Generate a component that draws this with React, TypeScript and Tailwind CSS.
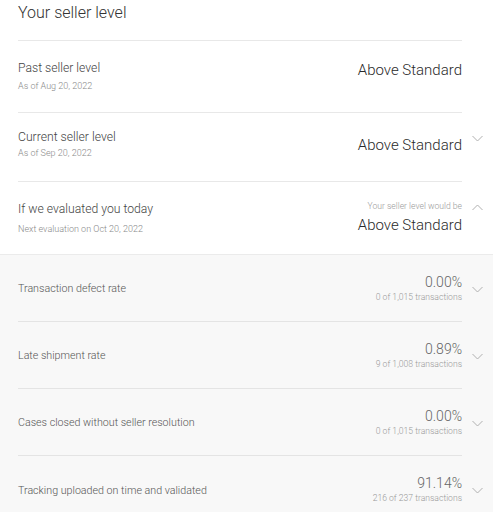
import React from "react";

const Chevron = ({ up = false }: { up?: boolean }) => (
  <svg width="11" height="7" viewBox="0 0 11 7" fill="none" className="text-[#b0b0b0]">
    <path d={up ? "M0.5 6 L5.5 1 L10.5 6" : "M0.5 1 L5.5 6 L10.5 1"} stroke="currentColor" strokeWidth="1" />
  </svg>
);

type LevelRowProps = {
  label: string;
  sub: string;
  value: string;
  note?: string;
  chevron?: "up" | "down";
  h: string;
  gap: string;
  leftClass: string;
  valueClass: string;
  border?: boolean;
};

const LevelRow = ({ label, sub, value, note, chevron, h, gap, leftClass, valueClass, border = true }: LevelRowProps) => (
  <div className={`flex ${h}`}>
    <div className={`ml-[18px] flex-1 flex items-center justify-between ${border ? "border-b border-[#e8e8e8]" : ""}`}>
      <div className={`flex flex-col ${leftClass}`}>
        <span className="text-[12.2px] leading-[16px] text-[#444]">{label}</span>
        <span className={`text-[9px] leading-[12px] text-[#8a8a8a] ${gap}`}>{sub}</span>
      </div>
      <div className={`flex flex-col items-end ${valueClass}`}>
        {note && <span className="text-[8.6px] leading-[10px] text-[#999] mb-[4px]">{note}</span>}
        <span className="text-[15px] leading-[20px] text-[#2a2a2a]">{value}</span>
      </div>
    </div>
    <div className="w-[31px] flex justify-center pt-[22px]">{chevron && <Chevron up={chevron === "up"} />}</div>
  </div>
);

type MetricProps = { label: string; pct: string; sub: string; border?: boolean };

const MetricRow = ({ label, pct, sub, border = true }: MetricProps) => (
  <div className="flex h-[67px]">
    <div className={`ml-[18px] flex-1 flex items-center justify-between ${border ? "border-b border-[#e4e4e4]" : ""}`}>
      <span className="text-[10.7px] text-[#555] mt-[3px]">{label}</span>
      <div className="flex flex-col items-end">
        <span className="text-[14px] leading-[17px] text-[#666]">{pct}</span>
        <span className="text-[8.6px] leading-[11px] text-[#999] mt-[1px]">{sub}</span>
      </div>
    </div>
    <div className="w-[31px] flex items-center justify-center pt-[2px]">
      <Chevron />
    </div>
  </div>
);

export default function App() {
  return (
    <div className="w-[493px] h-[512px] overflow-hidden bg-white font-['Roboto',sans-serif] font-light">
      <div className="flex h-[41px]">
        <div className="ml-[18px] flex-1 border-b border-[#e8e8e8]">
          <div className="text-[16px] leading-[22px] text-[#333] pt-[2px]">Your seller level</div>
        </div>
        <div className="w-[31px]" />
      </div>
      <LevelRow
        h="h-[72px]"
        gap="mt-[4px]"
        leftClass="self-start mt-[19px]"
        valueClass="self-start mt-[19px]"
        label="Past seller level"
        sub="As of Aug 20, 2022"
        value="Above Standard"
      />
      <LevelRow
        h="h-[69px]"
        gap="mt-[2px]"
        leftClass="self-start mt-[16px]"
        valueClass="self-start mt-[22px]"
        label="Current seller level"
        sub="As of Sep 20, 2022"
        value="Above Standard"
        chevron="down"
      />
      <LevelRow
        h="h-[72px]"
        gap="mt-[6px]"
        leftClass=""
        valueClass=""
        label="If we evaluated you today"
        sub="Next evaluation on Oct 20, 2022"
        note="Your seller level would be"
        value="Above Standard"
        chevron="up"
        border={false}
      />
      <div className="bg-[#f8f8f8] border-t border-[#ebebeb]">
        <MetricRow label="Transaction defect rate" pct="0.00%" sub="0 of 1,015 transactions" />
        <MetricRow label="Late shipment rate" pct="0.89%" sub="9 of 1,008 transactions" />
        <MetricRow label="Cases closed without seller resolution" pct="0.00%" sub="0 of 1,015 transactions" />
        <MetricRow label="Tracking uploaded on time and validated" pct="91.14%" sub="216 of 237 transactions" border={false} />
      </div>
    </div>
  );
}
